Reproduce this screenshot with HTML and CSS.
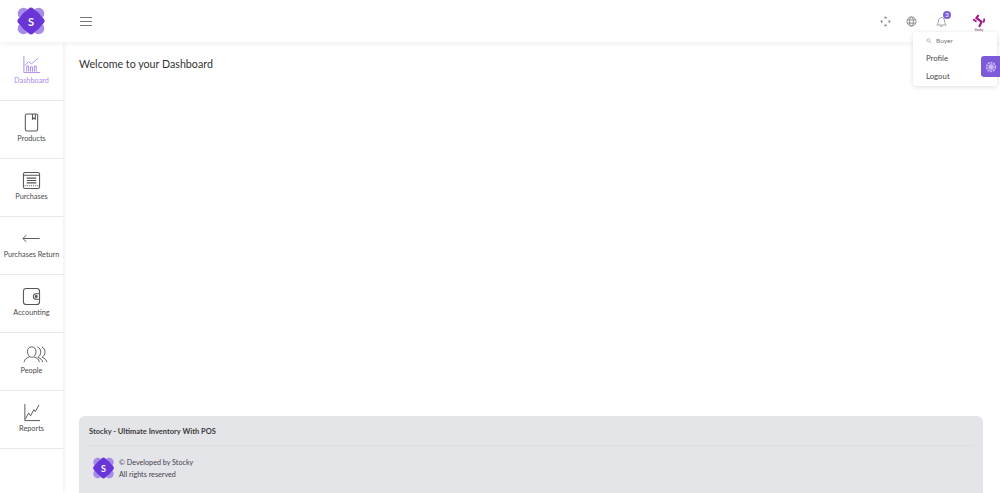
FILE: index.html
```html
<!DOCTYPE html>
<html lang="en">
<head>
<meta charset="utf-8">
<title>Stocky Dashboard</title>
<link rel="stylesheet" href="styles.css">
</head>
<body>
<svg class="defs" width="0" height="0" aria-hidden="true">
  <symbol id="logo" viewBox="0 0 30 30">
    <g fill="#a68ce6">
      <circle cx="7.500" cy="7.500" r="5.800"/><circle cx="22.500" cy="7.500" r="5.800"/>
      <circle cx="7.500" cy="22.500" r="5.800"/><circle cx="22.500" cy="22.500" r="5.800"/>
    </g>
    <rect x="4.500" y="4.500" width="21" height="21" rx="3.500" fill="#6a35d8" transform="rotate(45 15 15)"/>
    <circle cx="15" cy="15" r="11" fill="#6a35d8"/>
  </symbol>
</svg>
<header class="topbar">
  <div class="brand">
    <svg class="brand-logo"><use href="#logo"/></svg>
    <span class="brand-letter">S</span>
  </div>
  <button class="burger" aria-label="Menu"><i></i><i></i><i></i></button>
  <div class="top-actions">
    <svg class="top-icon" viewBox="0 0 14 14" fill="none" stroke="#777" stroke-width="1.200"><path d="M7 1l1.300 1.500H5.700zM7 13l1.300-1.500H5.700zM1 7l1.500-1.300v2.600zM13 7l-1.500-1.300v2.600z"/></svg>
    <svg class="top-icon globe" viewBox="0 0 14 14" fill="none" stroke="#777" stroke-width="1"><circle cx="7" cy="7" r="5.800"/><ellipse cx="7" cy="7" rx="2.500" ry="5.800"/><path d="M1.800 5h10.400M1.800 9h10.400"/></svg>
    <div class="bell">
      <svg class="top-icon" viewBox="0 0 14 14" fill="none" stroke="#888" stroke-width="1"><path d="M1 11.500c1.500-1 2-2.500 2-5 0-2.500 1.700-4.500 4-4.500s4 2 4 4.500c0 2.500.5 4 2 5z"/><path d="M5.500 12.800c.7.800 2.300.8 3 0"/></svg>
      <span class="badge">3</span>
    </div>
    <div class="avatar">
      <svg class="avatar-mark" viewBox="0 0 16 15" fill="none" stroke="#a21a86" stroke-width="2.400" stroke-linecap="round"><path d="M7 1.500L5 4l6 4.500-2.500 5"/><path d="M2 6l2.500 1.800M14 5.500l-.5 3" stroke-width="2"/></svg>
      <span class="avatar-text">Stocky</span>
    </div>
  </div>
</header>

<div class="dropdown">
  <div class="drop-user">
    <svg class="drop-key" viewBox="0 0 8 8" fill="none" stroke="#999" stroke-width=".9"><circle cx="3.200" cy="3" r="2"/><path d="M4.700 4.500L7 7"/></svg>
    <span>Buyer</span>
  </div>
  <div class="drop-item">Profile</div>
  <div class="drop-item">Logout</div>
</div>
<div class="customizer">
  <svg viewBox="0 0 14 14" fill="none" stroke="#c9b8f5" stroke-width="1.200"><circle cx="7" cy="7" r="2.500" fill="#c9b8f5"/><circle cx="7" cy="7" r="5" stroke-width="2" stroke-dasharray="2.200 1"/></svg>
</div>

<div class="shell">
  <nav class="sidebar">
    <a class="nav-item active">
      <svg class="nav-icon" viewBox="0 0 20 20" fill="none" stroke="#a98bea" stroke-width="1"><path d="M2 1v17.500h17"/><path d="M3 11l4-4 3 2.500 3-3 4-3"/><path d="M5 17.500v-6h2v6M9 17.500v-5h2v5M13 17.500v-6h2v6"/></svg>
      <span>Dashboard</span>
    </a>
    <a class="nav-item">
      <svg class="nav-icon" viewBox="0 0 20 20" fill="none" stroke="#555" stroke-width="1.100"><rect x="3.500" y="1" width="13" height="18" rx="2"/><path d="M11 1v5.500l1.500-1.200 1.500 1.200V1"/></svg>
      <span>Products</span>
    </a>
    <a class="nav-item">
      <svg class="nav-icon" viewBox="0 0 20 20" fill="none" stroke="#555" stroke-width="1.100"><rect x="1.500" y="1.500" width="17" height="17" rx="2"/><path d="M1.500 4.500h17M5 7.500h10M5 10h10M5 12.500h10"/><path d="M1.500 15.500h17" stroke-dasharray="1 1"/></svg>
      <span>Purchases</span>
    </a>
    <a class="nav-item">
      <svg class="nav-icon" viewBox="0 0 20 20" fill="none" stroke="#555" stroke-width="1"><path d="M1 10h17.500M4.500 6.500L1 10l3.500 3.500"/></svg>
      <span>Purchases Return</span>
    </a>
    <a class="nav-item">
      <svg class="nav-icon" viewBox="0 0 20 20" fill="none" stroke="#555" stroke-width="1.100"><rect x="1.500" y="1.500" width="17" height="17" rx="3"/><path d="M18.500 7h-3.500a3 3 0 0 0 0 6h3.500"/><circle cx="15" cy="10" r="1" fill="#555"/></svg>
      <span>Accounting</span>
    </a>
    <a class="nav-item">
      <svg class="nav-icon people" viewBox="0 0 26 20" fill="none" stroke="#555" stroke-width="1"><path d="M9 2c3 0 4.500 2 4.500 5s-2 6-4.500 6-4.500-3-4.500-6 1.500-5 4.500-5z"/><path d="M1 18c.5-3 2.500-4.500 5.500-5.500M11.500 12.500c3 1 5 2.500 5.500 5.500M15 2c2.500 1 3.500 3 3.500 5.500S17 12 15.500 13c2.500 1 4.500 2.500 5 5M19.500 2c2.500 1 3.500 3 3.500 5.500S21.500 12 20 13c2.500 1 4.500 2.500 5 5"/></svg>
      <span>People</span>
    </a>
    <a class="nav-item">
      <svg class="nav-icon" viewBox="0 0 20 20" fill="none" stroke="#555" stroke-width="1"><path d="M3 1v17.500h16"/><path d="M3.500 17L7 10.500l2 3 3.500-6.500 1.500 2L18 2"/></svg>
      <span>Reports</span>
    </a>
  </nav>

  <main class="content">
    <h1 class="title">Welcome to your Dashboard</h1>
    <footer class="footer">
      <div class="footer-title">Stocky - Ultimate Inventory With POS</div>
      <div class="footer-body">
        <div class="foot-brand">
          <svg class="foot-logo"><use href="#logo"/></svg>
          <span class="foot-letter">S</span>
        </div>
        <div class="foot-text">
          <div>© Developed by Stocky</div>
          <div>All rights reserved</div>
        </div>
      </div>
    </footer>
  </main>
</div>
</body>
</html>
```

FILE: styles.css
```css
* { box-sizing: border-box; }
html, body { margin: 0; height: 100%; overflow: hidden; }
body {
  background: #fff;
  font-family: "Lato", "Open Sans", sans-serif;
  color: #47404f;
  position: relative;
}
.defs { position: absolute; }

.topbar {
  height: 42px;
  display: flex;
  align-items: center;
  background: #fff;
  box-shadow: 0 1px 6px rgba(0, 0, 0, .08);
  position: relative;
  z-index: 2;
}
.brand {
  width: 30px;
  height: 30px;
  margin-left: 16px;
  position: relative;
}
.brand-logo { width: 30px; height: 30px; display: block; }
.brand-letter, .foot-letter {
  position: absolute;
  inset: 0;
  display: flex;
  align-items: center;
  justify-content: center;
  color: #fff;
  font-weight: 700;
  font-size: 11px;
}
.burger {
  margin-left: 34px;
  padding: 0;
  border: 0;
  background: none;
  width: 12px;
  display: flex;
  flex-direction: column;
  gap: 3px;
}
.burger i { display: block; height: 1px; background: #777; }
.top-actions {
  margin-left: auto;
  display: flex;
  align-items: center;
  padding-right: 14px;
}
.top-icon { width: 11px; height: 11px; display: block; }
.globe { margin-left: 15px; }
.bell { position: relative; margin-left: 19px; }
.badge {
  position: absolute;
  top: -5px;
  right: -4px;
  width: 8px;
  height: 8px;
  border-radius: 50%;
  background: #7c5bd9;
  color: #fff;
  font-size: 6px;
  line-height: 8px;
  text-align: center;
}
.avatar {
  margin-left: 25px;
  width: 14px;
  display: flex;
  flex-direction: column;
  align-items: center;
  padding-top: 4px;
}
.avatar-mark { width: 14px; height: 14px; display: block; }
.avatar-text { font-size: 3px; line-height: 4px; color: #7a1f6f; }

.dropdown {
  position: absolute;
  top: 32px;
  left: 913px;
  width: 84px;
  height: 54px;
  background: #fff;
  border-radius: 3px;
  box-shadow: 0 1px 5px rgba(0, 0, 0, .14);
  z-index: 3;
  padding: 3px 0 0 13px;
  font-size: 7.800px;
  color: #4a4a4a;
}
.drop-user {
  display: flex;
  align-items: center;
  gap: 4px;
  height: 11px;
  font-size: 6.500px;
  color: #777;
}
.drop-key { width: 6px; height: 6px; }
.drop-item { height: 18px; line-height: 18px; }
.drop-user + .drop-item { margin-top: 3px; }
.customizer {
  position: absolute;
  top: 56px;
  left: 981px;
  width: 19px;
  height: 21px;
  background: #7c5bd9;
  border-radius: 3px 0 0 3px;
  display: flex;
  align-items: center;
  justify-content: center;
  z-index: 4;
}
.customizer svg { width: 12px; height: 12px; }

.shell {
  display: flex;
  height: 451px;
}
.sidebar {
  width: 63px;
  flex: none;
  box-shadow: 1px 0 4px rgba(0, 0, 0, .08);
  background: #fff;
  padding-top: 1px;
}
.nav-item {
  height: 58px;
  display: flex;
  flex-direction: column;
  align-items: center;
  padding-top: 12px;
  border-bottom: 1px solid #e9e9ec;
  font-size: 7.300px;
  line-height: 11px;
  color: #4a4a4a;
  white-space: nowrap;
}
.nav-item span { margin-top: 1px; }
.nav-item.active { color: #a98bea; }
.nav-icon { width: 19px; height: 19px; display: block; flex: none; }
.people { width: 25px; margin-left: 8px; }

.content {
  flex: 1;
  min-width: 0;
  padding: 14px 17px 0 16px;
  display: flex;
  flex-direction: column;
}
.title {
  margin: 0;
  font-size: 10.700px;
  line-height: 15px;
  font-weight: 400;
  color: #333;
}
.footer {
  margin-top: auto;
  height: 77px;
  background: #e4e5e9;
  border-radius: 6px 6px 0 0;
  padding: 0 10px;
}
.footer-title {
  height: 30px;
  line-height: 31px;
  font-size: 7.500px;
  font-weight: 700;
  color: #3d3a40;
  border-bottom: 1px solid #dcdde1;
}
.footer-body {
  display: flex;
  align-items: flex-start;
  gap: 4px;
  padding: 10px 0 0 3px;
}
.foot-brand { width: 23px; height: 24px; position: relative; }
.foot-logo { width: 23px; height: 24px; display: block; }
.foot-letter { font-size: 9px; }
.foot-text { font-size: 7.200px; line-height: 11.500px; color: #47404f; padding-top: 1px; }
```
